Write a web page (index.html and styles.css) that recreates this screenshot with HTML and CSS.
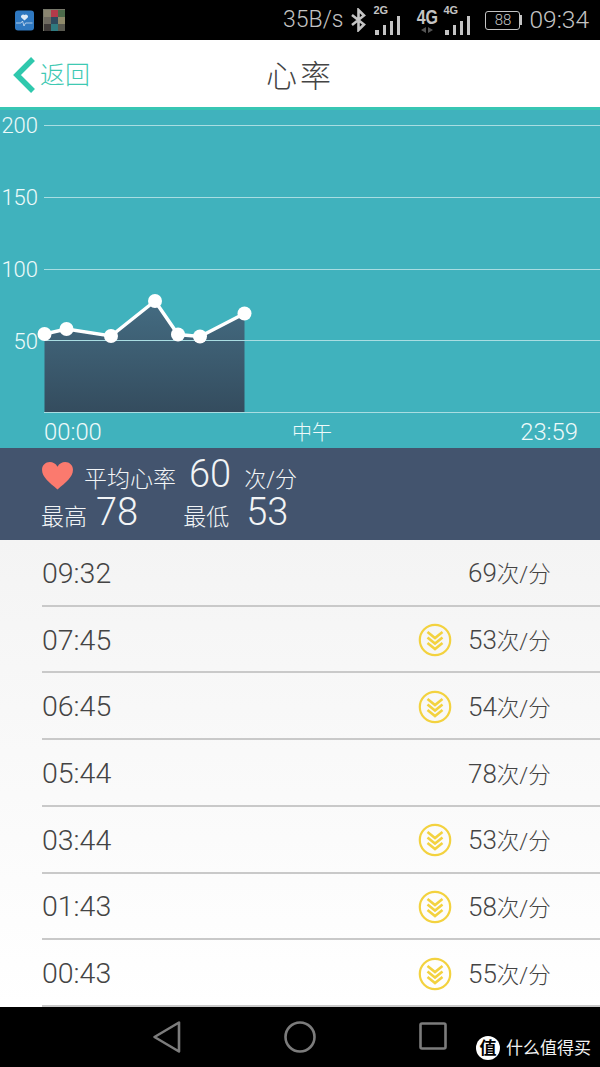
FILE: index.html
```html
<!DOCTYPE html>
<html lang="zh">
<head>
<meta charset="utf-8">
<title>心率</title>
<link rel="stylesheet" href="styles.css">
</head>
<body>
<div class="app">
  <div class="statusbar">
    <div class="status-left">
      <svg class="app-icon" width="19" height="21" viewBox="0 0 19 21"><rect x="0" y="0.5" width="19" height="20" rx="3" fill="#2f78c0"/><path d="M9.5 10.5 6.2 7.6a2.1 2.1 0 0 1 3.3-2.5 2.1 2.1 0 0 1 3.3 2.5z" fill="#dfeaf5"/><path d="M1 13h5l1.5-2 1.5 5 1.5-3h7" fill="none" stroke="#cfe0f2" stroke-width="0.8"/></svg>
      <div class="thumb-grid">
        <i class="c1"></i><i class="c2"></i><i class="c3"></i><i class="c4"></i><i class="c5"></i><i class="c6"></i><i class="c7"></i><i class="c8"></i><i class="c9"></i>
      </div>
    </div>
    <div class="status-right">
      <span class="speed">35B/s</span>
      <svg class="bt" width="17" height="24" viewBox="0 0 17 24"><path d="M2 7 14 16.500 8.500 22V2L14 7.500 2 17" fill="none" stroke="#c4c4c4" stroke-width="2.600"/></svg>
      <span class="signal">
        <span class="sig-label">2G</span>
        <svg width="25" height="19" viewBox="0 0 25 19"><rect x="0" y="14" width="4" height="5" fill="#c4c4c4"/><rect x="8" y="9" width="3" height="10" fill="#c4c4c4"/><rect x="15" y="5" width="3" height="14" fill="#c4c4c4"/><rect x="22" y="0" width="3" height="19" fill="#c4c4c4"/></svg>
      </span>
      <span class="net"><b>4G</b><svg width="14" height="6" viewBox="0 0 14 6"><path d="M6 0v6L1 3zM8 0v6l5-3z" fill="#555"/></svg></span>
      <span class="signal">
        <span class="sig-label">4G</span>
        <svg width="25" height="19" viewBox="0 0 25 19"><rect x="0" y="14" width="4" height="5" fill="#c4c4c4"/><rect x="8" y="9" width="3" height="10" fill="#c4c4c4"/><rect x="15" y="5" width="3" height="14" fill="#c4c4c4"/><rect x="22" y="0" width="3" height="19" fill="#c4c4c4"/></svg>
      </span>
      <span class="battery"><span class="batt-body">88</span><span class="batt-cap"></span></span>
      <span class="clock">09:34</span>
    </div>
  </div>

  <header class="topbar">
    <div class="back">
      <svg width="24" height="38" viewBox="0 0 24 38"><path d="M22 3 6 19l16 16" fill="none" stroke="#2fc8ad" stroke-width="5.500"/></svg>
      <span>返回</span>
    </div>
    <h1>心率</h1>
  </header>

  <section class="chart">
    <svg width="600" height="341" viewBox="0 107 600 341">
      <defs>
        <linearGradient id="area" x1="0" y1="0" x2="0" y2="1">
          <stop offset="0" stop-color="#446c82"/>
          <stop offset="1" stop-color="#344c5e"/>
        </linearGradient>
      </defs>
      <g class="grid">
        <line x1="44" x2="600" y1="125.500" y2="125.500"/>
        <line x1="44" x2="600" y1="197.500" y2="197.500"/>
        <line x1="44" x2="600" y1="269.500" y2="269.500"/>
      </g>
      <path d="M44.500 334 66.500 329 111 336 155 301 178 334.500 200 336.500 244.500 313.500V412H44.500z" fill="url(#area)"/>
      <g class="grid">
        <line x1="44" x2="600" y1="340.500" y2="340.500"/>
        <line x1="44" x2="600" y1="412.500" y2="412.500"/>
      </g>
      <polyline points="44.500,334 66.500,329 111,336 155,301 178,334.500 200,336.500 244.500,313.500" fill="none" stroke="#fff" stroke-width="3.500"/>
      <g fill="#fff">
        <circle cx="44.500" cy="334" r="7"/><circle cx="66.500" cy="329" r="7"/><circle cx="111" cy="336" r="7"/><circle cx="155" cy="301" r="7"/><circle cx="178" cy="334.500" r="7"/><circle cx="200" cy="336.500" r="7"/><circle cx="244.500" cy="313.500" r="7"/>
      </g>
      <g class="axis">
        <text x="38" y="133" text-anchor="end">200</text>
        <text x="38" y="205" text-anchor="end">150</text>
        <text x="38" y="277" text-anchor="end">100</text>
        <text x="38" y="349" text-anchor="end">50</text>
        <text class="x-time" x="44" y="440">00:00</text>
        <text class="x-noon" x="312" y="440" text-anchor="middle">中午</text>
        <text class="x-time" x="578" y="440" text-anchor="end">23:59</text>
      </g>
    </svg>
  </section>

  <section class="summary">
    <div class="sum-row sum-top">
      <svg class="heart" width="33" height="29" viewBox="0 0 32 28"><path d="M16 27.500C8 21 1 15.500 1 8.500 1 4 4.500 1 8.500 1c3 0 5.800 1.500 7.500 4.500C17.700 2.500 20.500 1 23.500 1 27.500 1 31 4 31 8.500c0 7-7 12.500-15 19z" fill="#fb7a6e"/></svg>
      <span class="lbl avg-lbl">平均心率</span>
      <span class="num avg-num">60</span>
      <span class="lbl unit">次/分</span>
    </div>
    <div class="sum-row sum-bottom">
      <span class="lbl">最高</span>
      <span class="num max-num">78</span>
      <span class="lbl min-lbl">最低</span>
      <span class="num min-num">53</span>
    </div>
  </section>

  <ul class="list">
    <li><span class="time">09:32</span><span class="rate">69<span class="per">次/分</span></span></li>
    <li><span class="time">07:45</span><svg class="low"><use href="#low-icon"/></svg><span class="rate">53<span class="per">次/分</span></span></li>
    <li><span class="time">06:45</span><svg class="low"><use href="#low-icon"/></svg><span class="rate">54<span class="per">次/分</span></span></li>
    <li><span class="time">05:44</span><span class="rate">78<span class="per">次/分</span></span></li>
    <li><span class="time">03:44</span><svg class="low"><use href="#low-icon"/></svg><span class="rate">53<span class="per">次/分</span></span></li>
    <li><span class="time">01:43</span><svg class="low"><use href="#low-icon"/></svg><span class="rate">58<span class="per">次/分</span></span></li>
    <li><span class="time">00:43</span><svg class="low"><use href="#low-icon"/></svg><span class="rate">55<span class="per">次/分</span></span></li>
  </ul>

  <footer class="navbar">
    <svg class="nav-icon nav-back" width="30" height="34" viewBox="0 0 30 34"><path d="M27 2.500v29L2.500 17z" fill="none" stroke="#7c7c7c" stroke-width="2.600" stroke-linejoin="round"/></svg>
    <svg class="nav-icon nav-home" width="32" height="32" viewBox="0 0 32 32"><circle cx="16" cy="16" r="14.500" fill="none" stroke="#7c7c7c" stroke-width="2.600"/></svg>
    <svg class="nav-icon nav-recent" width="28" height="28" viewBox="0 0 28 28"><rect x="1.500" y="1.500" width="25" height="25" rx="1.500" fill="none" stroke="#7c7c7c" stroke-width="2.600"/></svg>
    <div class="watermark"><span class="wm-badge">值</span><span>什么值得买</span></div>
  </footer>
</div>

<svg class="defs" width="0" height="0">
  <symbol id="low-icon" viewBox="0 0 34 34">
    <circle cx="17" cy="17" r="15.200" fill="none" stroke="#f3d23f" stroke-width="2.200"/>
    <path d="M9.500 9 17 15l7.500-6M9.500 14.500 17 20.500l7.500-6M9.500 20 17 26l7.500-6" fill="none" stroke="#f3d23f" stroke-width="2.600"/>
  </symbol>
</svg>
</body>
</html>
```
FILE: styles.css
```css
* { box-sizing: border-box; }
html, body { margin: 0; padding: 0; }
body {
  width: 600px;
  height: 1067px;
  overflow: hidden;
  background: #000;
  font-family: Roboto, "Noto Sans CJK SC", sans-serif;
  font-weight: 300;
}
.app { display: flex; flex-direction: column; width: 600px; height: 1067px; }
.defs { position: absolute; }

.statusbar {
  height: 40px;
  background: #000;
  display: flex;
  align-items: center;
  justify-content: space-between;
  padding: 0 11px 0 15px;
  color: #c4c4c4;
}
.status-left { display: flex; align-items: center; gap: 9px; }
.thumb-grid {
  display: grid;
  grid-template-columns: repeat(3, 7px);
  grid-auto-rows: 7px;
  width: 22px;
  height: 22px;
  padding: 0.5px;
  background: #77786a;
}
.thumb-grid i { display: block; }
.c1 { background: #8a8570; } .c2 { background: #b33a4a; } .c3 { background: #4c6a4a; }
.c4 { background: #6e6a60; } .c5 { background: #2e4a5e; } .c6 { background: #8f8a6a; }
.c7 { background: #3e3a38; } .c8 { background: #2f7a80; } .c9 { background: #5a5a50; }
.status-right { display: flex; align-items: center; }
.speed { font-size: 23px; line-height: 40px; margin-right: 7px; }
.bt { margin-right: 6px; }
.signal { position: relative; display: block; width: 27px; height: 30px; }
.signal svg { position: absolute; right: 0; bottom: 0; }
.sig-label { position: absolute; left: 0; top: -1px; font-size: 11px; line-height: 12px; font-weight: 700; font-family: "Liberation Sans", sans-serif; }
.net { display: flex; flex-direction: column; align-items: center; width: 20px; margin: 0 6px 0 17px; }
.net b { font: 700 20px/20px "Liberation Sans", sans-serif; transform: scaleX(0.8); }
.battery { display: flex; align-items: center; margin: 0 7px 0 15px; }
.batt-body {
  width: 35px;
  height: 19px;
  border: 1.500px solid #c4c4c4;
  border-radius: 3px;
  font-size: 15px;
  line-height: 16px;
  text-align: center;
}
.batt-cap { width: 2px; height: 10px; background: #c4c4c4; }
.clock { font-size: 24.500px; line-height: 40px; }

.topbar {
  position: relative;
  height: 67px;
  background: #fff;
  display: flex;
  align-items: center;
  justify-content: center;
}
.back {
  position: absolute;
  left: 11px;
  top: 17px;
  display: flex;
  align-items: center;
  gap: 5px;
  color: #3fc9b3;
  font-size: 25px;
  line-height: 38px;
}
.back svg { margin-top: -3px; }
.topbar h1 {
  margin: 0;
  padding-top: 5px;
  font-size: 31px;
  font-weight: 300;
  color: #444;
  line-height: 67px;
  letter-spacing: 3px;
}

.chart {
  height: 341px;
  background: #40b2bd;
  border-top: 3px solid #38c6b4;
  position: relative;
}
.chart svg { display: block; margin-top: -3px; }
.grid line { stroke: #a9dde2; stroke-width: 1; }
.axis text { fill: #eefafa; font-size: 22px; font-family: Roboto, "Noto Sans CJK SC", sans-serif; font-weight: 300; }
.axis .x-time { font-size: 23.800px; }
.axis .x-noon { font-size: 20px; }

.summary {
  height: 92px;
  background: #43546e;
  color: #f2f4f6;
  padding: 4px 0 0 41px;
}
.sum-row { display: flex; align-items: baseline; }
.sum-top { height: 40px; position: relative; padding-left: 43px; }
.heart { position: absolute; left: 0; top: 9px; }
.sum-bottom { height: 38px; margin-top: -2px; }
.lbl { font-size: 23px; }
.num { font-size: 38px; }
.avg-num { margin-left: 13px; }
.unit { margin-left: 13px; font-size: 22px; }
.max-num { margin-left: 9px; }
.min-lbl { margin-left: 45px; }
.min-num { margin-left: 17px; }

.list {
  list-style: none;
  margin: 0;
  padding: 0;
  height: 467px;
  background: linear-gradient(#f4f4f4, #fff);
  display: flex;
  flex-direction: column;
}
.list li {
  flex: 1;
  display: flex;
  align-items: center;
  margin-left: 42px;
  padding-right: 51px;
  border-bottom: 2px solid #c9c9c9;
  color: #444;
}
.time { flex: 1; font-size: 28.500px; position: relative; top: 1px; }
.low { width: 34px; height: 34px; margin-right: 16px; margin-left: 1px; position: relative; top: 1px; }
.rate { width: 81px; white-space: nowrap; font-size: 26px; }
.per { font-size: 22.500px; }

.navbar {
  flex: 1;
  position: relative;
  background: #000;
}
.nav-icon { position: absolute; }
.nav-back { left: 152px; top: 13px; }
.nav-home { left: 284px; top: 14px; }
.nav-recent { left: 419px; top: 15px; }
.watermark {
  position: absolute;
  left: 476px;
  top: 29px;
  display: flex;
  align-items: center;
  gap: 6px;
  color: #f2f2f2;
  font-size: 17px;
  font-weight: 400;
  line-height: 24px;
}
.wm-badge {
  width: 24px;
  height: 24px;
  border-radius: 50%;
  background: #fff;
  color: #000;
  text-align: center;
  font-size: 17px;
  font-weight: 700;
}
```
